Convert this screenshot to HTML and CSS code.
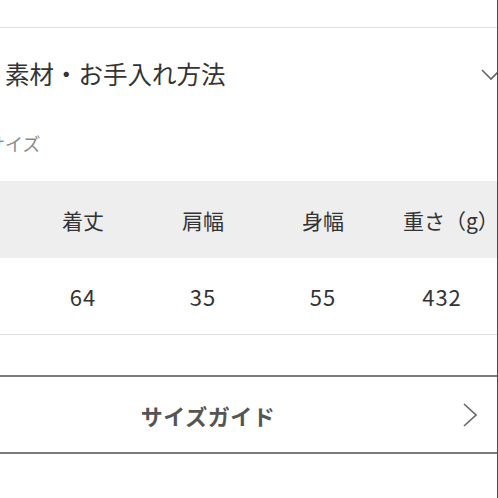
FILE: index.html
```html
<!DOCTYPE html>
<html lang="ja">
<head>
<meta charset="utf-8">
<title>素材・お手入れ方法</title>
<link rel="stylesheet" href="styles.css">
</head>
<body>
<div class="page">
  <div class="top-area"></div>
  <div class="acc-head">
    <span class="acc-title">素材・お手入れ方法</span>
    <svg class="chev-down" width="20" height="12" viewBox="0 0 20 12"><path d="M1 1 L10 10 L19 1" fill="none" stroke="#666" stroke-width="1.6"/></svg>
  </div>
  <div class="size-label">サイズ</div>
  <div class="size-table">
    <div class="row head">
      <div class="cell"></div>
      <div class="cell">着丈</div>
      <div class="cell">肩幅</div>
      <div class="cell">身幅</div>
      <div class="cell last">重さ（g）</div>
    </div>
    <div class="row body">
      <div class="cell"></div>
      <div class="cell">64</div>
      <div class="cell">35</div>
      <div class="cell">55</div>
      <div class="cell last">432</div>
    </div>
  </div>
  <div class="guide-btn">
    <span></span>
    <span class="guide-text">サイズガイド</span>
    <svg class="chev-right" width="14" height="24" viewBox="0 0 14 24"><path d="M1 1 L13 12 L1 23" fill="none" stroke="#666" stroke-width="1.6"/></svg>
  </div>
</div>
</body>
</html>
```
FILE: styles.css
```css
html, body {
  margin: 0;
  padding: 0;
  background: #fff;
  overflow: hidden;
}
body {
  font-family: "Noto Sans CJK JP", "Noto Sans", sans-serif;
  color: #333;
  width: 498px;
  height: 498px;
  position: relative;
}
body::after {
  content: "";
  position: absolute;
  top: 0;
  right: 0;
  width: 1px;
  height: 498px;
  background: #4a4a4a;
}
.page {
  margin-left: -81px;
  width: 578px;
  display: flex;
  flex-direction: column;
}
.top-area {
  height: 27px;
  border-bottom: 1px solid #e2e2e2;
}
.acc-head {
  height: 92px;
  display: flex;
  align-items: center;
  justify-content: space-between;
  padding-left: 86px;
}
.acc-title {
  font-size: 24.5px;
  line-height: 30px;
  color: #333;
}
.chev-down {
  margin-right: -4px;
  margin-top: 2px;
}
.size-label {
  margin-top: 11px;
  padding-left: 68px;
  font-size: 18px;
  line-height: 24px;
  color: #8a8a8a;
}
.size-table {
  margin-top: 26px;
  display: flex;
  flex-direction: column;
}
.row {
  display: grid;
  grid-template-columns: 104px 120px 120px 120px 1fr;
  align-items: center;
}
.row.head {
  height: 77px;
  background: #eeeeee;
  font-size: 21px;
}
.row.body {
  height: 76px;
  border-bottom: 1px solid #e0e0e0;
  font-size: 22px;
  letter-spacing: 1px;
}
.cell {
  text-align: center;
  color: #333;
}
.cell.last {
  padding-left: 4px;
}
.row.head .cell.last {
  padding-left: 20px;
}
.guide-btn {
  margin-top: 40px;
  height: 75px;
  border-top: 2px solid #7a7a7a;
  border-bottom: 2px solid #7a7a7a;
  display: grid;
  grid-template-columns: 1fr auto 1fr;
  align-items: center;
}
.guide-text {
  font-size: 22px;
  font-weight: 700;
  color: #555;
  letter-spacing: 0.5px;
}
.chev-right {
  justify-self: end;
  margin-right: 20px;
}
```
